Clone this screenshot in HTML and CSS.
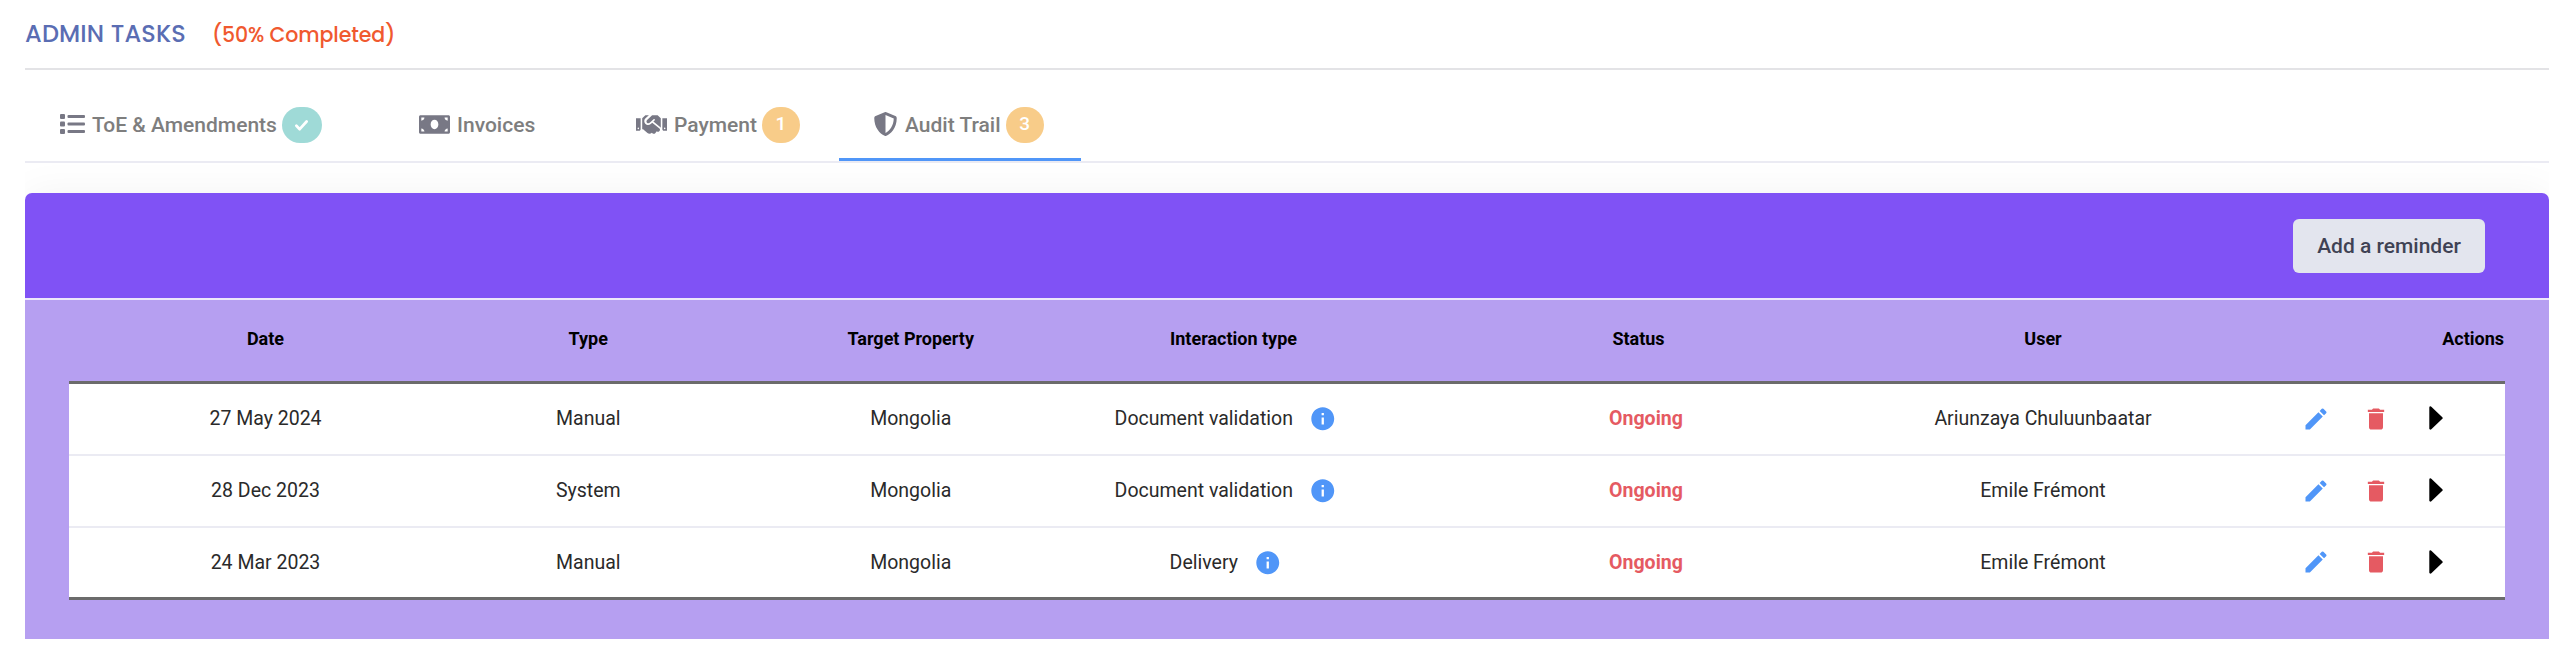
FILE: index.html
```html
<!DOCTYPE html>
<html lang="en">
<head>
<meta charset="utf-8">
<title>Admin tasks</title>
<link rel="stylesheet" href="styles.css">
</head>
<body>
<svg class="sprite" aria-hidden="true">
  <symbol id="info" viewBox="0 0 24 24"><path d="M12 2C6.48 2 2 6.48 2 12s4.48 10 10 10 10-4.480 10-10S17.520 2 12 2zm1 15h-2v-6h2v6zm0-8h-2V7h2v2z"/></symbol>
  <symbol id="edit" viewBox="0 0 24 24"><path d="M3 17.250V21h3.750L17.810 9.940l-3.750-3.750L3 17.250zM20.710 7.040a1 1 0 0 0 0-1.410l-2.340-2.340a1 1 0 0 0-1.410 0l-1.830 1.830 3.750 3.750 1.830-1.830z"/></symbol>
  <symbol id="trash" viewBox="0 0 24 24"><path d="M6 19c0 1.100.9 2 2 2h8c1.100 0 2-.9 2-2V7H6v12zM19 4h-3.500l-1-1h-5l-1 1H5v2h14V4z"/></symbol>
  <symbol id="caret" viewBox="0 0 14 24"><path d="M1.500 1.500L12.500 12 1.500 22.500z" stroke="currentColor" stroke-width="2.400" stroke-linejoin="round"/></symbol>
</svg>
<main class="page">
  <header class="heading">
    <h1 class="heading-title">ADMIN TASKS</h1>
    <span class="heading-progress">(50% Completed)</span>
  </header>

  <nav class="tabs">
    <a class="tab">
      <svg class="tab-icon icon-list" viewBox="0 0 25 20"><rect width="5" height="5" rx="1"/><rect y="7.500" width="5" height="5" rx="1"/><rect y="15" width="5" height="5" rx="1"/><rect x="7.500" y="1" width="17.500" height="3" rx="1"/><rect x="7.500" y="8.500" width="17.500" height="3" rx="1"/><rect x="7.500" y="16" width="17.500" height="3" rx="1"/></svg>
      <span class="tab-label">ToE &amp; Amendments</span>
      <span class="badge badge-done"><svg class="check" viewBox="0 0 13 11"><path d="M1.400 5.800L4.700 9.200 11.600 1.500"/></svg></span>
    </a>
    <a class="tab">
      <svg class="tab-icon icon-bill" viewBox="0 0 640 384"><path fill-rule="evenodd" d="M608 0H32C14 0 0 14 0 32v320c0 18 14 32 32 32h576c18 0 32-14 32-32V32c0-18-14-32-32-32zM48 336v-64c35 0 64 29 64 64H48zm0-224V48h64c0 35-29 64-64 64zm272 176c-44 0-80-43-80-96s36-96 80-96 80 43 80 96-36 96-80 96zm272 48h-64c0-35 29-64 64-64v64zm0-224c-35 0-64-29-64-64h64v64z"/></svg>
      <span class="tab-label">Invoices</span>
    </a>
    <a class="tab">
      <svg class="tab-icon icon-hands" viewBox="0 0 640 384"><path d="M434.700 0h-85.900c-8 0-15.700 3-21.600 8.400l-98.300 90c-.1.1-.2.3-.3.400-16.600 15.600-16.300 40.500-2.100 56 12.700 13.900 39.400 17.600 56.100 2.700.1-.1.3-.1.400-.2l79.900-73.200c6.500-5.900 16.700-5.500 22.600 1 6 6.500 5.500 16.600-1 22.600l-26.100 23.900L504 249.700c2.900 2.400 5.500 5 7.900 7.700V64l-54.600-54.600C451.400 3.400 443.200 0 434.700 0zM544 64.200v223.900c0 17.700 14.300 32 32 32h64V64.200h-96zm48 223.900c-8.800 0-16-7.200-16-16s7.200-16 16-16 16 7.200 16 16-7.200 16-16 16zM0 320h64c17.700 0 32-14.300 32-32V64.200H0V320zm48-63.900c8.800 0 16 7.200 16 16s-7.200 16-16 16-16-7.200-16-16c0-8.900 7.200-16 16-16zm435.900 18.600L334.600 153.500l-30 27.500c-33 30.200-83.800 27.400-113.200-4.800-29.400-32.600-27.500-83.400 4.800-113.200L266.300 0h-61.100c-8.500 0-16.600 3.400-22.600 9.400L128 64v223.900h18.300l90.500 81.900c27.400 22.300 67.700 18.100 90-9.300l.2-.2 17.900 15.500c15.900 13 39.400 10.500 52.300-5.400l31.400-38.600 5.400 4.400c13.700 11.100 33.900 9.100 45-4.700l9.500-11.700c11.200-13.800 9.100-33.900-4.600-45.100z"/></svg>
      <span class="tab-label">Payment</span>
      <span class="badge badge-count">1</span>
    </a>
    <a class="tab tab-active">
      <svg class="tab-icon icon-shield" viewBox="0 0 480 512"><path d="M466.500 83.700l-192-80a48.150 48.150 0 0 0-36.900 0l-192 80C27.700 91.100 16 108.600 16 128c0 198.500 114.500 335.700 221.500 380.300 11.800 4.900 25.100 4.900 36.900 0C360.100 472.600 496 349.300 496 128c0-19.400-11.700-36.900-29.500-44.300zM256.100 446.300l-.1-381 175.900 73.300c-3.300 151.400-82.100 261.100-175.800 307.700z" transform="translate(-16)"/></svg>
      <span class="tab-label">Audit Trail</span>
      <span class="badge badge-count">3</span>
    </a>
  </nav>

  <div class="content">
    <section class="card">
      <div class="card-header"><button class="reminder">Add a reminder</button></div>
      <div class="card-body">
        <div class="row row-head">
          <span>Date</span><span>Type</span><span>Target Property</span><span>Interaction type</span><span>Status</span><span>User</span><span class="head-actions">Actions</span>
        </div>
        <div class="rows">
          <div class="row">
            <span>27 May 2024</span><span>Manual</span><span>Mongolia</span>
            <span class="interaction">Document validation<svg class="info"><use href="#info"/></svg></span>
            <span class="status">Ongoing</span><span>Ariunzaya Chuluunbaatar</span>
            <span class="actions"><svg class="edit"><use href="#edit"/></svg><svg class="trash"><use href="#trash"/></svg><svg class="caret"><use href="#caret"/></svg></span>
          </div>
          <div class="row">
            <span>28 Dec 2023</span><span>System</span><span>Mongolia</span>
            <span class="interaction">Document validation<svg class="info"><use href="#info"/></svg></span>
            <span class="status">Ongoing</span><span>Emile Frémont</span>
            <span class="actions"><svg class="edit"><use href="#edit"/></svg><svg class="trash"><use href="#trash"/></svg><svg class="caret"><use href="#caret"/></svg></span>
          </div>
          <div class="row">
            <span>24 Mar 2023</span><span>Manual</span><span>Mongolia</span>
            <span class="interaction">Delivery<svg class="info"><use href="#info"/></svg></span>
            <span class="status">Ongoing</span><span>Emile Frémont</span>
            <span class="actions"><svg class="edit"><use href="#edit"/></svg><svg class="trash"><use href="#trash"/></svg><svg class="caret"><use href="#caret"/></svg></span>
          </div>
        </div>
      </div>
    </section>
  </div>
</main>
</body>
</html>
```

FILE: styles.css
```css
* { box-sizing: border-box; }
body { margin: 0; background: #fff; font-family: Roboto, "Liberation Sans", sans-serif; }
svg { display: block; flex: none; fill: currentColor; }
.sprite { display: none; }
.page { width: 2524px; margin-left: 25px; }

.heading {
  display: flex;
  align-items: baseline;
  gap: 27px;
  height: 70px;
  padding-top: 17px;
  border-bottom: 2px solid #e3e3e6;
  font-family: Poppins, Lato, sans-serif;
  white-space: nowrap;
}
.heading-title { margin: 0; width: 160px; font-size: 24px; line-height: 34px; font-weight: 500; letter-spacing: 0.150px; color: #5a6db3; }
.heading-progress { font-size: 20.500px; font-weight: 500; letter-spacing: -0.080px; color: #f0592f; }

.tabs {
  display: grid;
  grid-template-columns: 359px 216px 239px 242px;
  height: 93px;
  border-bottom: 2px solid #ebebf3;
}
.tab {
  display: flex;
  align-items: center;
  padding: 22px 0 0 35px;
  border-bottom: 3px solid transparent;
  font-size: 21px;
  font-weight: 500;
  color: #7e7e7e;
  white-space: nowrap;
}
.tab-active { border-bottom-color: #5096f8; }
.tab-icon { margin-right: 7px; margin-bottom: 2px; color: #787885; }
.icon-list { width: 25px; height: 20px; }
.icon-bill { width: 31px; height: 19px; }
.icon-hands { width: 31px; height: 19px; margin-left: 1px; }
.icon-shield { width: 23px; height: 24px; margin-right: 8px; }
.badge {
  display: flex;
  align-items: center;
  justify-content: center;
  width: 38px;
  height: 36px;
  margin-left: 5px;
  border-radius: 18px;
  color: #fff;
  font-size: 19px;
}
.badge-done { width: 40px; background: #9fdad7; }
.badge-count { background: #f8cc89; padding-bottom: 3px; }
.check { width: 13px; height: 11px; fill: none; stroke: #fff; stroke-width: 2.700; stroke-linecap: round; stroke-linejoin: round; }

.content { padding-top: 30px; overflow: hidden; }
.card { border-radius: 7px 7px 0 0; box-shadow: 0 0 40px rgba(0, 0, 0, 0.050); }
.card-header {
  display: flex;
  justify-content: flex-end;
  align-items: flex-start;
  height: 105px;
  padding: 26px 64px 0 0;
  border-radius: 7px 7px 0 0;
  background: #8052f5;
}
.reminder {
  width: 192px;
  height: 54px;
  padding: 0;
  border: 0;
  border-radius: 6px;
  background: #e3e5ee;
  color: #3f4254;
  font: 500 21px Roboto, "Liberation Sans", sans-serif;
}
.card-body { height: 341px; padding: 0 44px; border-top: 2px solid #ede8fb; background: #b69ff1; }
.row {
  display: grid;
  grid-template-columns: 323px 322.500px 322.500px 323px 487px 322px 1fr;
  align-items: center;
  height: 72px;
  padding-left: 35px;
  font-size: 19.500px;
  color: #2a2a2a;
  text-align: center;
  white-space: nowrap;
}
.row-head { height: 81px; padding-bottom: 5px; font-size: 18px; font-weight: 700; color: #000; }
.head-actions { padding-right: 1px; text-align: right; }
.rows { height: 219px; border-top: 3px solid #6b6b6b; border-bottom: 3px solid #6b6b6b; background: #fff; }
.rows .row { padding-bottom: 1px; }
.rows .row:not(:last-child) { border-bottom: 2px solid #ebebf3; }
.rows .row:last-child { height: 69px; }
.interaction { display: flex; justify-content: center; align-items: center; padding-right: 16px; }
.info { width: 27.500px; height: 27.500px; margin: 1px 0 0 16px; color: #5096f8; }
.status { padding-left: 15px; font-weight: 700; color: #e55a62; }
.actions { display: flex; align-items: center; padding-left: 97.500px; }
.edit { width: 28px; height: 28px; color: #5096f8; }
.trash { width: 28px; height: 28px; margin-left: 32px; color: #e55a62; }
.caret { width: 14px; height: 24px; margin: 0 0 1px 39px; color: #000; }
```
